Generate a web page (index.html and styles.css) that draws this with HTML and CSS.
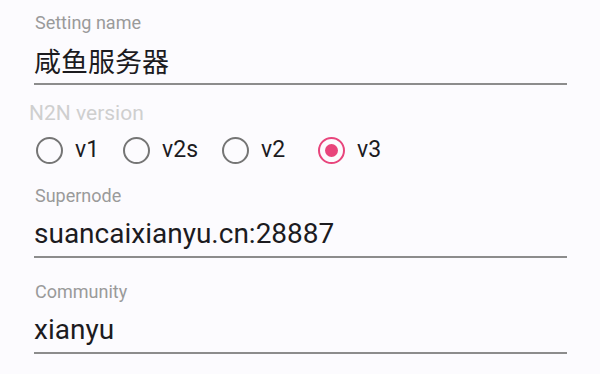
FILE: index.html
```html
<!DOCTYPE html>
<html>
<head>
<meta charset="utf-8">
<link rel="stylesheet" href="styles.css">
</head>
<body>
<div class="form">
  <div class="field first">
    <div class="label">Setting name</div>
    <div class="value cjk">咸鱼服务器</div>
  </div>
  <div class="group">
    <div class="group-label">N2N version</div>
    <div class="radios">
      <div class="radio"><span class="dot"></span><span class="rtext">v1</span></div>
      <div class="radio"><span class="dot"></span><span class="rtext">v2s</span></div>
      <div class="radio"><span class="dot"></span><span class="rtext">v2</span></div>
      <div class="radio checked"><span class="dot"></span><span class="rtext">v3</span></div>
    </div>
  </div>
  <div class="field second">
    <div class="label">Supernode</div>
    <div class="value">suancaixianyu.cn:28887</div>
  </div>
  <div class="field third">
    <div class="label">Community</div>
    <div class="value">xianyu</div>
  </div>
</div>
</body>
</html>
```
FILE: styles.css
```css
html, body {
  margin: 0;
  padding: 0;
  background: #fcfbfe;
}
body {
  font-family: Roboto, "Noto Sans", "Noto Sans CJK SC", sans-serif;
  width: 600px;
  height: 374px;
  overflow: hidden;
}
.form {
  padding-left: 34px;
  width: 533px;
}
.field {
  display: flex;
  flex-direction: column;
  gap: 12px;
  border-bottom: 2px solid #8c8c8c;
  padding-bottom: 6px;
}
.first { margin-top: 13px; }
.second { margin-top: 20px; }
.third { margin-top: 24px; }
.label {
  font-size: 18px;
  line-height: 20px;
  color: #9a9a9a;
  padding-left: 1px;
}
.value {
  font-size: 28px;
  line-height: 32px;
  color: #1c1b1f;
}
.cjk {
  font-family: "Noto Sans CJK SC", sans-serif;
  font-size: 27px;
}
.group {
  margin-top: 17px;
}
.group-label {
  font-size: 21px;
  line-height: 22px;
  color: #cfcfcf;
  margin-left: -5px;
}
.radios {
  display: flex;
  gap: 24px;
  margin-top: 10px;
  height: 32px;
  align-items: center;
  padding-left: 2px;
}
.radio {
  display: flex;
  align-items: center;
  gap: 12px;
}
.radio.checked {
  margin-left: 9px;
}
.dot {
  width: 27px;
  height: 27px;
  box-sizing: border-box;
  border: 2.5px solid #757575;
  border-radius: 50%;
  display: flex;
  align-items: center;
  justify-content: center;
}
.checked .dot {
  border-color: #e8457c;
}
.checked .dot::after {
  content: "";
  width: 13px;
  height: 13px;
  border-radius: 50%;
  background: #e8457c;
}
.rtext {
  font-size: 23px;
  line-height: 32px;
  color: #1c1b1f;
}
```
